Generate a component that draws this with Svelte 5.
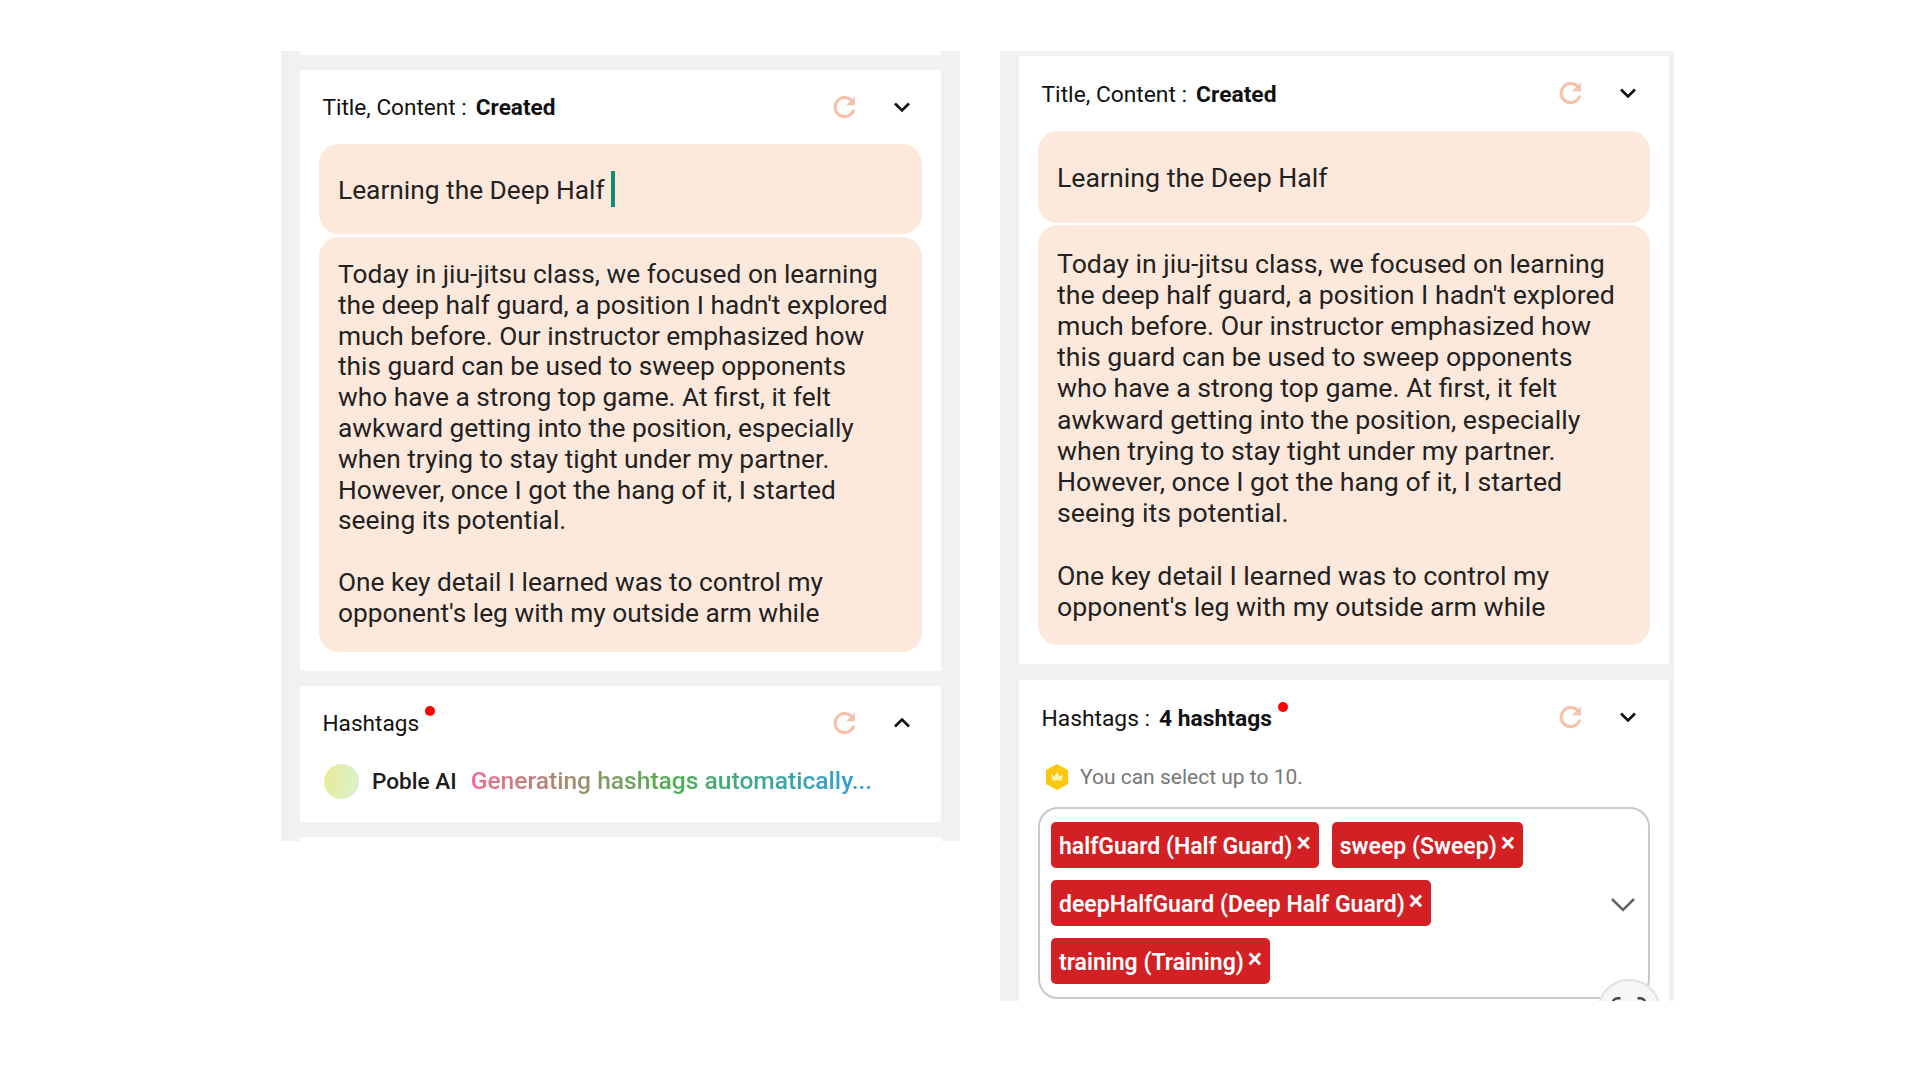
<script>
  const lines = [
    'Today in jiu-jitsu class, we focused on learning',
    "the deep half guard, a position I hadn't explored",
    'much before. Our instructor emphasized how',
    'this guard can be used to sweep opponents',
    'who have a strong top game. At first, it felt',
    'awkward getting into the position, especially',
    'when trying to stay tight under my partner.',
    'However, once I got the hang of it, I started',
    'seeing its potential.',
    '',
    'One key detail I learned was to control my',
    "opponent's leg with my outside arm while"
  ];
  const body = lines.join('\n');
  const tagRows = [
    ['halfGuard (Half Guard)', 'sweep (Sweep)'],
    ['deepHalfGuard (Deep Half Guard)'],
    ['training (Training)']
  ];
</script>

{#snippet refresh()}
  <svg class="refresh" viewBox="0 0 24 24" fill="none" stroke="#f8c0aa" stroke-width="2.8">
    <path d="M19.8 15.5A8.8 8.8 0 1 1 18 6" stroke-linecap="round" />
    <path d="M21.2 2.2v8.2h-8.2z" fill="#f8c0aa" stroke="none" />
  </svg>
{/snippet}

{#snippet chevron(up)}
  <svg class="chev" class:up viewBox="0 0 20 12" fill="none" stroke="#111" stroke-width="2.6">
    <path d="M3 2.5l7 7 7-7" />
  </svg>
{/snippet}

<div class="page">
  <section class="panel left">
    <div class="stub"></div>
    <div class="card first">
      <header>
        <span class="label">Title, Content :</span>
        <b>Created</b>
        <span class="tools">{@render refresh()}{@render chevron(false)}</span>
      </header>
      <div class="box title">Learning the Deep Half<i class="caret"></i></div>
      <div class="box text">{body}</div>
    </div>
    <div class="card second">
      <header>
        <span class="label">Hashtags</span>
        <em class="dot"></em>
        <span class="tools">{@render refresh()}{@render chevron(true)}</span>
      </header>
      <div class="ai">
        <span class="orb"></span>
        <span class="poble">Poble AI</span>
        <span class="grad">Generating hashtags automatically...</span>
      </div>
    </div>
    <div class="stub"></div>
  </section>

  <section class="panel right">
    <div class="card first">
      <header>
        <span class="label">Title, Content :</span>
        <b>Created</b>
        <span class="tools">{@render refresh()}{@render chevron(false)}</span>
      </header>
      <div class="box title">Learning the Deep Half</div>
      <div class="box text">{body}</div>
    </div>
    <div class="card second">
      <header>
        <span class="label">Hashtags :</span>
        <b>4 hashtags</b>
        <em class="dot"></em>
        <span class="tools">{@render refresh()}{@render chevron(false)}</span>
      </header>
      <div class="limit">
        <svg class="crown" viewBox="0 0 24 26">
          <path d="M12 1l10 5.6v12.8L12 25 2 19.4V6.6z" fill="#fdc70f" stroke="#fdc70f" stroke-width="2" stroke-linejoin="round" />
          <path d="M6 10l3.2 2.6L12 8l2.8 4.6L18 10l-1.2 6.5H7.2z" fill="#fff3a8" />
        </svg>
        <span>You can select up to 10.</span>
      </div>
      <div class="select">
        <div class="rows">
          {#each tagRows as row}
            <div class="row">
              {#each row as tag}
                <span class="tag">{tag}<span class="x">×</span></span>
              {/each}
            </div>
          {/each}
        </div>
        <svg class="sel-chev" viewBox="0 0 26 16" fill="none" stroke="#666" stroke-width="2.6">
          <path d="M2 3l11 11L24 3" />
        </svg>
      </div>
      <div class="expand">
        <svg viewBox="0 0 40 12" fill="none" stroke="#444" stroke-width="2.6">
          <path d="M3 11V8a5 5 0 0 1 5-5h3M29 3h3a5 5 0 0 1 5 5v3" />
        </svg>
      </div>
    </div>
  </section>
</div>

<style>
  :global(body) { margin: 0; background: #fff; }
  .page {
    display: flex;
    align-items: flex-start;
    gap: 40px;
    width: 1920px;
    height: 1080px;
    box-sizing: border-box;
    padding: 51px 0 0 281px;
    font-family: Roboto, sans-serif;
    color: #212121;
    overflow: hidden;
  }
  .panel {
    background: #f1f1f1;
    display: flex;
    flex-direction: column;
    box-sizing: border-box;
    overflow: hidden;
  }
  .left { width: 679px; height: 790px; padding: 0 19px; }
  .right { width: 674px; height: 950px; padding: 5px 5px 0 19px; }
  .stub { height: 4px; background: #fff; flex: none; }
  .card { background: #fff; flex: none; position: relative; box-sizing: border-box; padding: 0 19px; }
  .left .first { margin-top: 15px; height: 601px; }
  .left .second { margin: 15px 0; height: 136px; }
  .right .first { height: 608px; }
  .right .second { margin-top: 16px; height: 340px; }

  header {
    display: flex;
    align-items: center;
    font-size: 22.6px;
    height: 74px;
    padding-left: 3.5px;
    color: #111;
  }
  .right header { height: 75px; font-size: 22.8px; padding-top: 2px; box-sizing: border-box; }
  .right .second header { height: 77px; padding-top: 0; }
  .label { margin-right: 9px; }
  .left .second .label { margin-right: 0; }
  header b { font-weight: 700; color: #111; }
  .dot {
    width: 10px;
    height: 10px;
    border-radius: 50%;
    background: #f00;
    margin: -24px 0 0 6px;
    flex: none;
  }
  .tools { margin-left: auto; display: flex; align-items: center; }
  .left .tools { padding-right: 10px; margin-top: -1px; }
  .right .tools { padding-right: 12px; margin-top: -3px; }
  .refresh { width: 26px; height: 26px; display: block; }
  .chev { width: 20px; height: 12px; display: block; margin-left: 34px; }
  .chev.up { transform: rotate(180deg); }

  .box {
    background: #fde9dc;
    border-radius: 20px;
    padding-left: 19px;
    font-size: 26.3px;
    color: #222;
  }
  .right .box { font-size: 26.7px; }
  .title { height: 90px; display: flex; align-items: center; }
  .title { padding-top: 1px; box-sizing: border-box; }
  .right .title { height: 92px; }
  .caret {
    width: 4px;
    height: 36px;
    background: #0d8f76;
    margin: -1px 0 0 6px;
    flex: none;
  }
  .text {
    margin-top: 3px;
    height: 415px;
    padding-top: 22px;
    box-sizing: border-box;
    line-height: 30.8px;
    white-space: pre;
  }
  .right .text { margin-top: 2px; height: 420px; padding-top: 23.5px; line-height: 31.2px; }

  .ai { display: flex; align-items: center; height: 35px; margin-top: 4px; padding-left: 5px; }
  .orb {
    width: 35px;
    height: 35px;
    border-radius: 50%;
    background: linear-gradient(100deg, #e9eb96, #d9f2cf);
    flex: none;
  }
  .poble { font-size: 22.6px; font-weight: 500; margin-left: 13px; color: #1c1c1c; }
  .grad {
    font-size: 24.6px;
    font-weight: 500;
    margin-left: 14px;
    margin-top: -2px;
    background: linear-gradient(90deg, #f46a8e 0%, #4caf50 50%, #2a9fe6 100%);
    -webkit-background-clip: text;
    background-clip: text;
    color: transparent;
  }

  .limit {
    display: flex;
    align-items: center;
    gap: 11px;
    font-size: 21px;
    color: #777;
    height: 26px;
    padding-left: 7px;
    margin-top: 7px;
  }
  .crown { width: 24px; height: 26px; flex: none; }
  .select {
    margin-top: 17px;
    height: 192px;
    box-sizing: border-box;
    border: 2px solid #c9c9c9;
    border-radius: 20px;
    padding: 13px 0 0 11px;
    display: flex;
    justify-content: space-between;
    align-items: center;
    background: #fff;
  }
  .rows { display: flex; flex-direction: column; gap: 12px; align-self: flex-start; }
  .row { display: flex; gap: 13px; }
  .tag {
    height: 46px;
    display: flex;
    align-items: center;
    padding: 2px 8px 0;
    box-sizing: border-box;
    background: #d32024;
    color: #fff;
    font-size: 23px;
    font-weight: 600;
    border-radius: 5px;
    white-space: nowrap;
  }
  .x { margin-left: 4px; font-weight: 500; font-size: 27px; line-height: 1; margin-top: -5px; }
  .sel-chev { width: 26px; height: 16px; margin: -12px 12px 0 0; flex: none; }
  .expand {
    position: absolute;
    left: 578px;
    top: 299px;
    width: 64px;
    height: 64px;
    box-sizing: border-box;
    border: 2px solid #e2e2e2;
    border-radius: 50%;
    background: #f6f6f6;
  }
  .expand svg { position: absolute; left: 11px; top: 14px; width: 38px; height: 12px; }
</style>
